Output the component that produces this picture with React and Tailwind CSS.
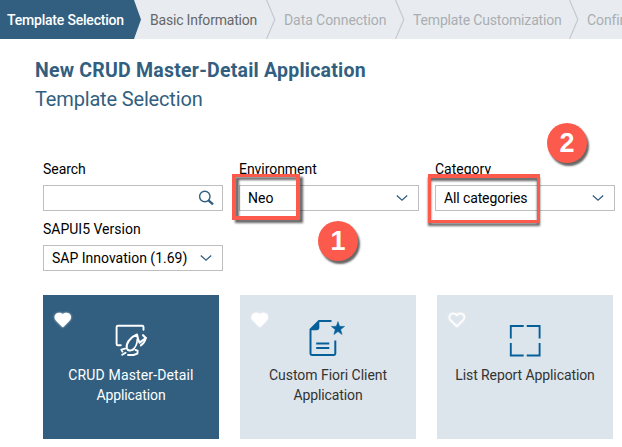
import React from "react";

function Separator() {
  return (
    <svg className="h-[39px] w-[10px] shrink-0" viewBox="0 0 10 39" fill="none" stroke="#c3c9d0" strokeWidth="1.2">
      <path d="M0.5 0 L8.8 19.5 L0.5 39" />
    </svg>
  );
}

function Heart({ filled }) {
  return (
    <svg
      className="absolute left-[10px] top-[16px] h-[18px] w-[19px] drop-shadow-[0_0_1px_rgba(255,255,255,0.7)]"
      viewBox="0 0 19 18"
      fill={filled ? "#fff" : "none"}
      stroke="#fff"
      strokeWidth="1.5"
      strokeLinejoin="round"
    >
      <path d="M9.8 15.4 L3.6 9.3 C1.6 7.3 1.9 4.3 3.8 3.1 C5.9 1.8 8.6 2.4 9.8 4.5 C11 2.4 13.7 1.8 15.8 3.1 C17.7 4.3 18 7.3 16 9.3 Z" />
    </svg>
  );
}

function Field({ label, value, labelClass, valueClass, search }) {
  return (
    <div className="w-[180px]">
      <div className="flex h-[20px] items-center text-[14px] leading-[20px]">
        <span className={labelClass}>{label}</span>
      </div>
      <div className="mt-[6px] flex h-[26px] items-center justify-between border border-[#bfbfbf] bg-white pl-[8px] pr-[8px]">
        <span className={"text-[14px] leading-[24px] " + (valueClass || "")}>{value}</span>
        {search ? (
          <svg className="h-[16px] w-[16px]" viewBox="0 0 16 16" fill="none" stroke="#325f80">
            <circle cx="6.8" cy="6.5" r="5.2" strokeWidth="1.4" />
            <path d="M10.5 10.3 L15 14.4" strokeWidth="2.3" />
          </svg>
        ) : (
          <svg className="mr-[2px] h-[8px] w-[12px]" viewBox="0 0 12 8" fill="none" stroke="#325f80" strokeWidth="1.3">
            <path d="M0.8 1.4 L6 6.2 L11.2 1.4" />
          </svg>
        )}
      </div>
    </div>
  );
}

function Card({ active, filled, icon, children }) {
  return (
    <div
      className={
        "relative flex h-[144px] w-[176px] flex-col items-center text-center text-[14px] leading-[20px] " +
        (active ? "bg-[#325f80] text-white" : "bg-[#dde5ec] text-[#333]")
      }
    >
      <Heart filled={filled} />
      <div className="mt-[22px] h-[48px] w-[48px]">{icon}</div>
      {children}
    </div>
  );
}

const crudIcon = (
  <svg className="h-[48px] w-[48px]" viewBox="107 317 48 48" fill="none" stroke="#fff" strokeWidth="1.9" strokeLinejoin="round" strokeLinecap="round">
    <path d="M120.8 345.3 H117.8 Q116.6 345.3 116.6 344 V327 Q116.6 325.7 117.9 325.7 H142.2 Q143.5 325.7 143.5 327 V329.8" />
    <path d="M133.8 349 C130.8 351.4 127.6 350.8 126.8 348.2 C125.8 344 129.5 337.4 137 334.6 C137.6 338 138.2 340.6 139.6 342.6 L145.8 338 L143 335.2" strokeWidth="2.1" />
    <path d="M137.2 339.5 C137.3 343.5 135.8 347 132.8 349.8" strokeWidth="1.6" />
    <path d="M145.8 338 C145 341.2 143.4 343.8 140.8 345.4" />
    <path d="M125.2 348.6 L121.3 349.6 L122.4 351.6 M122.2 354.8 L125.6 352.8" />
    <path d="M128 355 H133.4 L137.4 353.6 L137.6 350.6 L135.6 350" />
  </svg>
);

const fioriIcon = (
  <svg className="h-[48px] w-[48px]" viewBox="304.5 317 48 48" fill="none" stroke="#05609a" strokeWidth="2">
    <path d="M332 321 H319.5 L311 329.5 V353.6 Q311 354.9 312.3 354.9 H334.5 Q335.8 354.9 335.8 353.6 V340.5" />
    <path d="M311 329.8 L319.8 321 V327.5 Q319.8 330.3 317 330.3 H311 Z" fill="#05609a" stroke="none" />
    <path d="M316.7 343.4 H329.8 M316.7 348 H329.8" />
    <path d="M338.5 321.6 L340.1 326.3 L345.1 326.4 L341.1 329.6 L342.6 334.6 L338.5 331.6 L334.4 334.6 L335.7 329.6 L331.8 326.4 L336.8 326.3 Z" fill="#05609a" stroke="#05609a" strokeWidth="0.5" />
  </svg>
);

const listIcon = (
  <svg className="h-[48px] w-[48px]" viewBox="500 317 48 48" fill="none" stroke="#05609a" strokeWidth="1.9">
    <path d="M509.8 338.5 V326 H522.7 M525.7 326 H538.6 V338.5 M538.6 343 V355.5 H525.7 M522.7 355.5 H509.8 V343" />
  </svg>
);

export default function App() {
  return (
    <div className="relative h-[447px] w-[622px] overflow-hidden bg-white font-['Roboto','Noto_Sans',sans-serif] text-black">
      <nav className="flex h-[39px] w-[640px] items-center whitespace-nowrap bg-[#e8ecf0] text-[14px] leading-[39px]">
        <div className="flex h-[39px] w-[142px] shrink-0 bg-[#325f80] pl-[7px] pt-[1px] text-white [clip-path:polygon(0_0,134px_0,141px_19.5px,134px_39px,0_39px)]">
          <span className="font-medium tracking-[-0.2px]">Template Selection</span>
        </div>
        <div className="w-[124px] shrink-0 pl-[8px] pt-[1px] text-[#666]"><span className="tracking-[-0.2px]">Basic Information</span></div>
        <Separator />
        <div className="w-[119px] shrink-0 pl-[8px] pt-[1px] text-[#aaaeb1]"><span className="tracking-[-0.07px]">Data Connection</span></div>
        <Separator />
        <div className="w-[164px] shrink-0 pl-[8px] pt-[1px] text-[#aaaeb1]"><span className="tracking-[-0.16px]">Template Customization</span></div>
        <Separator />
        <div className="shrink-0 pl-[8px] pt-[1px] text-[#aaaeb1]"><span className="tracking-[-0.1px]">Confirm</span></div>
      </nav>

      <header className="pl-[35px] pt-[17px] text-[#325f80]">
        <h1 className="h-[29px] whitespace-nowrap text-[19.5px] font-bold leading-[29px] tracking-[0.22px]">New CRUD Master-Detail Application</h1>
        <h2 className="h-[29px] whitespace-nowrap text-[20px] leading-[29px] tracking-[-0.16px]">Template Selection</h2>
      </header>

      <section className="mt-[45px] flex flex-col gap-[8px] pl-[43px]">
        <div className="flex gap-[16px]">
          <Field label="Search" labelClass="tracking-[-0.05px]" search />
          <Field label="Environment" labelClass="tracking-[-0.05px]" value="Neo" />
          <Field label="Category" value="All categories" valueClass="tracking-[-0.12px]" />
        </div>
        <Field label="SAPUI5 Version" value="SAP Innovation (1.69)" />
      </section>

      <section className="mt-[24px] flex gap-[21px] pl-[43px]">
        <Card active filled icon={crudIcon}>
          <span className="tracking-[0.14px]">CRUD Master-Detail</span>
          <span className="tracking-[-0.1px]">Application</span>
        </Card>
        <Card filled icon={fioriIcon}>
          <span className="tracking-[-0.03px]">Custom Fiori Client</span>
          <span className="tracking-[-0.1px]">Application</span>
        </Card>
        <Card icon={listIcon}>
          <span className="tracking-[-0.09px]">List Report Application</span>
        </Card>
      </section>

      <div className="absolute left-[232px] top-[174px] h-[46px] w-[68px] border-[4px] border-t-[3.5px] border-[#fc5a4c] drop-shadow-[3px_3px_1px_rgba(0,0,0,0.6)]" />
      <div className="absolute left-[428px] top-[174px] h-[49px] w-[112px] border-[3px] border-t-[4px] border-[#fc5a4c] drop-shadow-[0px_3px_1px_rgba(0,0,0,0.6)]" />
      <div className="absolute left-[318px] top-[221px] flex h-[40px] w-[40px] items-center justify-center rounded-full bg-[#fc5a4c] font-['Liberation_Sans',sans-serif] text-[27px] font-bold leading-none text-white shadow-[2px_3px_2px_rgba(0,0,0,0.6)]">1</div>
      <div className="absolute left-[547px] top-[123px] flex h-[40px] w-[40px] items-center justify-center rounded-full bg-[#fc5a4c] font-['Liberation_Sans',sans-serif] text-[27px] font-bold leading-none text-white shadow-[2px_3px_2px_rgba(0,0,0,0.6)]">2</div>
    </div>
  );
}
